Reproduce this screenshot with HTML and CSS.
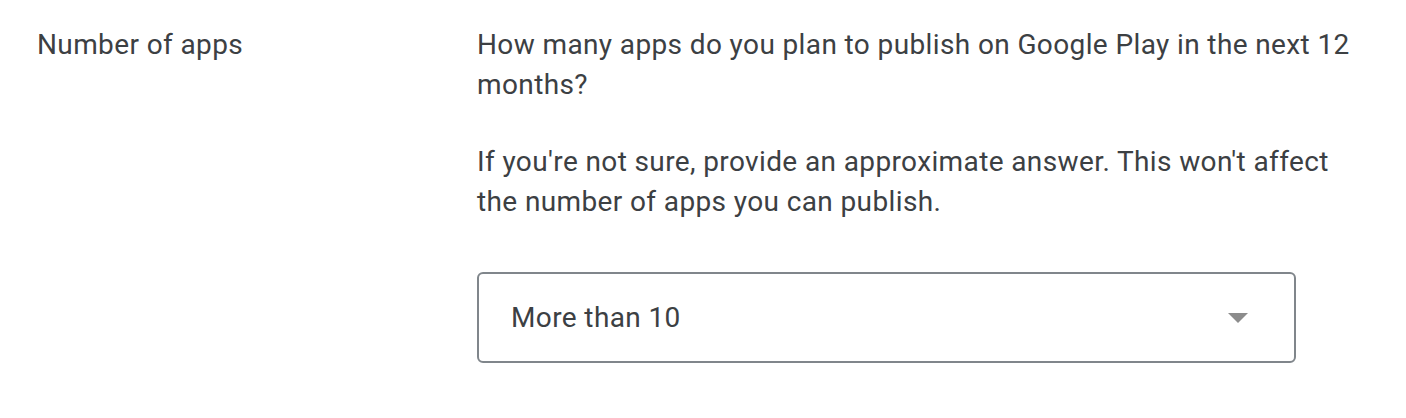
FILE: index.html
```html
<!DOCTYPE html>
<html lang="en">
<head>
    <meta charset="UTF-8">
    <title>Number of apps</title>
    <link rel="stylesheet" href="styles.css">
</head>
<body>
    <div class="field-row">
        <div class="field-label">Number of apps</div>
        <div class="field-body">
            <p>How many apps do you plan to publish on Google Play in the next 12 months?</p>
            <p>If you're not sure, provide an approximate answer. This won't affect the number of apps you can publish.</p>
            <div class="select-box">
                <span class="select-value">More than 10</span>
                <svg class="select-arrow" width="20" height="10" viewBox="0 0 20 10">
                    <path d="M0 0 L20 0 L10 10 Z" fill="#8c8c8c"/>
                </svg>
            </div>
        </div>
    </div>
</body>
</html>
```

FILE: styles.css
```css
body {
    margin: 0;
    background: #ffffff;
    font-family: Roboto, "Liberation Sans", sans-serif;
    font-size: 28px;
    line-height: 40px;
    letter-spacing: 0.38px;
    color: #3c4043;
}
.field-row {
    display: grid;
    grid-template-columns: 440px 885px;
    padding: 25px 0 0 37px;
}
.field-body p {
    margin: 0 0 37px 0;
}
.select-box {
    width: 819px;
    height: 91px;
    margin-top: 50px;
    box-sizing: border-box;
    border: 2px solid #80868b;
    border-radius: 6px;
    display: flex;
    align-items: center;
    justify-content: space-between;
    padding: 0 46px 0 32px;
}
.select-arrow {
    display: block;
}
```
